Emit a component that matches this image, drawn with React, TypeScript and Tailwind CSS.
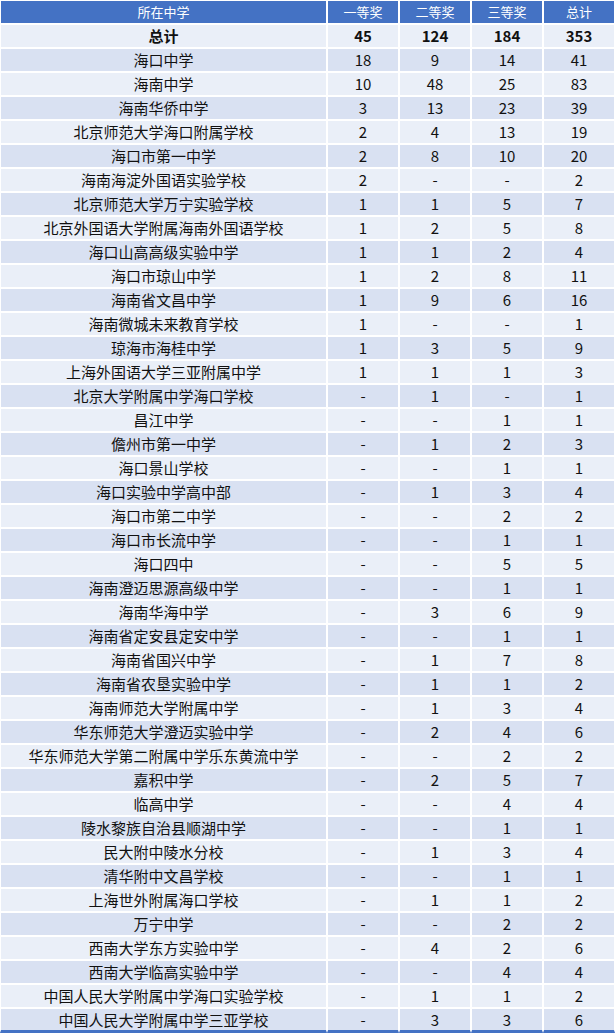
type Row = [string, string, string, string, string];

const total: Row = ["总计", "45", "124", "184", "353"];

const rows: Row[] = [
  ["海口中学", "18", "9", "14", "41"],
  ["海南中学", "10", "48", "25", "83"],
  ["海南华侨中学", "3", "13", "23", "39"],
  ["北京师范大学海口附属学校", "2", "4", "13", "19"],
  ["海口市第一中学", "2", "8", "10", "20"],
  ["海南海淀外国语实验学校", "2", "-", "-", "2"],
  ["北京师范大学万宁实验学校", "1", "1", "5", "7"],
  ["北京外国语大学附属海南外国语学校", "1", "2", "5", "8"],
  ["海口山高高级实验中学", "1", "1", "2", "4"],
  ["海口市琼山中学", "1", "2", "8", "11"],
  ["海南省文昌中学", "1", "9", "6", "16"],
  ["海南微城未来教育学校", "1", "-", "-", "1"],
  ["琼海市海桂中学", "1", "3", "5", "9"],
  ["上海外国语大学三亚附属中学", "1", "1", "1", "3"],
  ["北京大学附属中学海口学校", "-", "1", "-", "1"],
  ["昌江中学", "-", "-", "1", "1"],
  ["儋州市第一中学", "-", "1", "2", "3"],
  ["海口景山学校", "-", "-", "1", "1"],
  ["海口实验中学高中部", "-", "1", "3", "4"],
  ["海口市第二中学", "-", "-", "2", "2"],
  ["海口市长流中学", "-", "-", "1", "1"],
  ["海口四中", "-", "-", "5", "5"],
  ["海南澄迈思源高级中学", "-", "-", "1", "1"],
  ["海南华海中学", "-", "3", "6", "9"],
  ["海南省定安县定安中学", "-", "-", "1", "1"],
  ["海南省国兴中学", "-", "1", "7", "8"],
  ["海南省农垦实验中学", "-", "1", "1", "2"],
  ["海南师范大学附属中学", "-", "1", "3", "4"],
  ["华东师范大学澄迈实验中学", "-", "2", "4", "6"],
  ["华东师范大学第二附属中学乐东黄流中学", "-", "-", "2", "2"],
  ["嘉积中学", "-", "2", "5", "7"],
  ["临高中学", "-", "-", "4", "4"],
  ["陵水黎族自治县顺湖中学", "-", "-", "1", "1"],
  ["民大附中陵水分校", "-", "1", "3", "4"],
  ["清华附中文昌学校", "-", "-", "1", "1"],
  ["上海世外附属海口学校", "-", "1", "1", "2"],
  ["万宁中学", "-", "-", "2", "2"],
  ["西南大学东方实验中学", "-", "4", "2", "6"],
  ["西南大学临高实验中学", "-", "-", "4", "4"],
  ["中国人民大学附属中学海口实验学校", "-", "1", "1", "2"],
  ["中国人民大学附属中学三亚学校", "-", "3", "3", "6"],
];

const headers = ["所在中学", "一等奖", "二等奖", "三等奖", "总计"];

export default function App() {
  return (
    <div
      className="w-[615px] bg-white text-[#111]"
      style={{ fontFamily: '"Noto Sans CJK SC", "Noto Sans", sans-serif' }}
    >
      <div className="grid grid-cols-[327px_72px_72px_72px_72px]">
        {/* 表头 */}
        {headers.map((h) => (
          <div
            key={h}
            className="h-[24px] pb-px border border-white bg-[#4472c4] text-white text-[13px] leading-none flex items-center justify-center"
          >
            {h}
          </div>
        ))}

        {/* 总计 */}
        {total.map((c, i) => (
          <div
            key={"t" + i}
            className="h-[24px] pb-px border border-white bg-[#eaeff8] text-[15px] font-bold leading-none flex items-center justify-center"
          >
            {c}
          </div>
        ))}

        {/* 各学校 */}
        {rows.map((r, ri) => {
          const last = ri === rows.length - 1;
          const bg = ri % 2 === 0 ? "bg-[#d9e1f2]" : "bg-[#eaeff8]";
          return r.map((c, ci) => (
            <div
              key={ri + "-" + ci}
              className={
                last
                  ? `h-[25px] pb-px border border-white border-b-[3px] border-b-[#4472c4] ${bg} text-[15px] leading-none flex items-center justify-center`
                  : `h-[24px] pb-px border border-white ${bg} text-[15px] leading-none flex items-center justify-center`
              }
            >
              {c}
            </div>
          ));
        })}
      </div>
    </div>
  );
}
